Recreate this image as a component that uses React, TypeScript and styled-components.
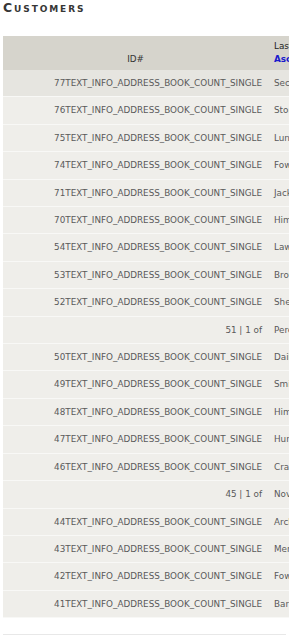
import React from 'react';
import styled, { createGlobalStyle } from 'styled-components';

const GlobalStyle = createGlobalStyle`
  html, body {
    margin: 0;
    padding: 0;
    background: #ffffff;
    overflow-x: hidden;
  }
  body {
    font-family: "DejaVu Sans", Verdana, sans-serif;
  }
`;

const Page = styled.div`
  padding: 1px 3px 0 3px;
`;

const Title = styled.h1`
  margin: 0;
  font-size: 12.5px;
  line-height: 13px;
  font-weight: bold;
  font-variant: small-caps;
  letter-spacing: 1.9px;
  color: #363636;
`;

const Table = styled.table`
  margin-top: 22px;
  width: 520px;
  border-collapse: collapse;
  table-layout: fixed;
  font-size: 8.8px;
`;

const HeadCell = styled.th<{ $width?: number; $align?: string }>`
  width: ${({ $width }) => ($width ? `${$width}px` : 'auto')};
  background: #d6d4cc;
  padding: 4px 6px 4px 6px;
  line-height: 13px;
  vertical-align: bottom;
  text-align: ${({ $align }) => $align || 'center'};
  font-weight: normal;
  color: #333333;
  white-space: nowrap;
  overflow: hidden;
`;

const HeadLabel = styled.div`
  color: #222222;
`;

const SortLink = styled.a`
  color: #1a1acc;
  font-weight: bold;
  text-decoration: none;
`;

const Row = styled.tr<{ $active?: boolean }>`
  background: ${({ $active }) => ($active ? '#e6e5e0' : '#efeeea')};
  border-bottom: 1px solid #f8f8f6;
`;

const Cell = styled.td<{ $align?: string }>`
  padding: 8px 6px 8px 6px;
  line-height: 10.4px;
  text-align: ${({ $align }) => $align || 'left'};
  color: #5a5a5a;
  white-space: nowrap;
  overflow: hidden;
`;

const Divider = styled.div`
  margin-top: 16px;
  border-top: 1px solid #e8e8e8;
`;

const SUFFIX = 'TEXT_INFO_ADDRESS_BOOK_COUNT_SINGLE';

const customers = [
  { id: '77', name: 'Secor' },
  { id: '76', name: 'Stone' },
  { id: '75', name: 'Lunsford' },
  { id: '74', name: 'Fowler' },
  { id: '71', name: 'Jackson' },
  { id: '70', name: 'Himes' },
  { id: '54', name: 'Lawson' },
  { id: '53', name: 'Brown' },
  { id: '52', name: 'Shelton' },
  { id: '51', name: 'Perez', count: '51 | 1 of' },
  { id: '50', name: 'Daily' },
  { id: '49', name: 'Smith' },
  { id: '48', name: 'Himes' },
  { id: '47', name: 'Hunter' },
  { id: '46', name: 'Crane' },
  { id: '45', name: 'Novak', count: '45 | 1 of' },
  { id: '44', name: 'Archer' },
  { id: '43', name: 'Mercer' },
  { id: '42', name: 'Fowler' },
  { id: '41', name: 'Barnes' },
];

const App: React.FC = () => {
  return (
    <>
      <GlobalStyle />
      <Page>
        <Title>Customers</Title>
        <Table>
          <thead>
            <tr>
              <HeadCell $width={253}>ID#</HeadCell>
              <HeadCell $align="left">
                <HeadLabel>Last Name</HeadLabel>
                <SortLink href="#">Asc</SortLink>
              </HeadCell>
            </tr>
          </thead>
          <tbody>
            {customers.map((c, i) => (
              <Row key={c.id} $active={i === 0}>
                <Cell $align="right">{c.count || `${c.id}${SUFFIX}`}</Cell>
                <Cell>{c.name}</Cell>
              </Row>
            ))}
          </tbody>
        </Table>
        <Divider />
      </Page>
    </>
  );
};

export default App;
